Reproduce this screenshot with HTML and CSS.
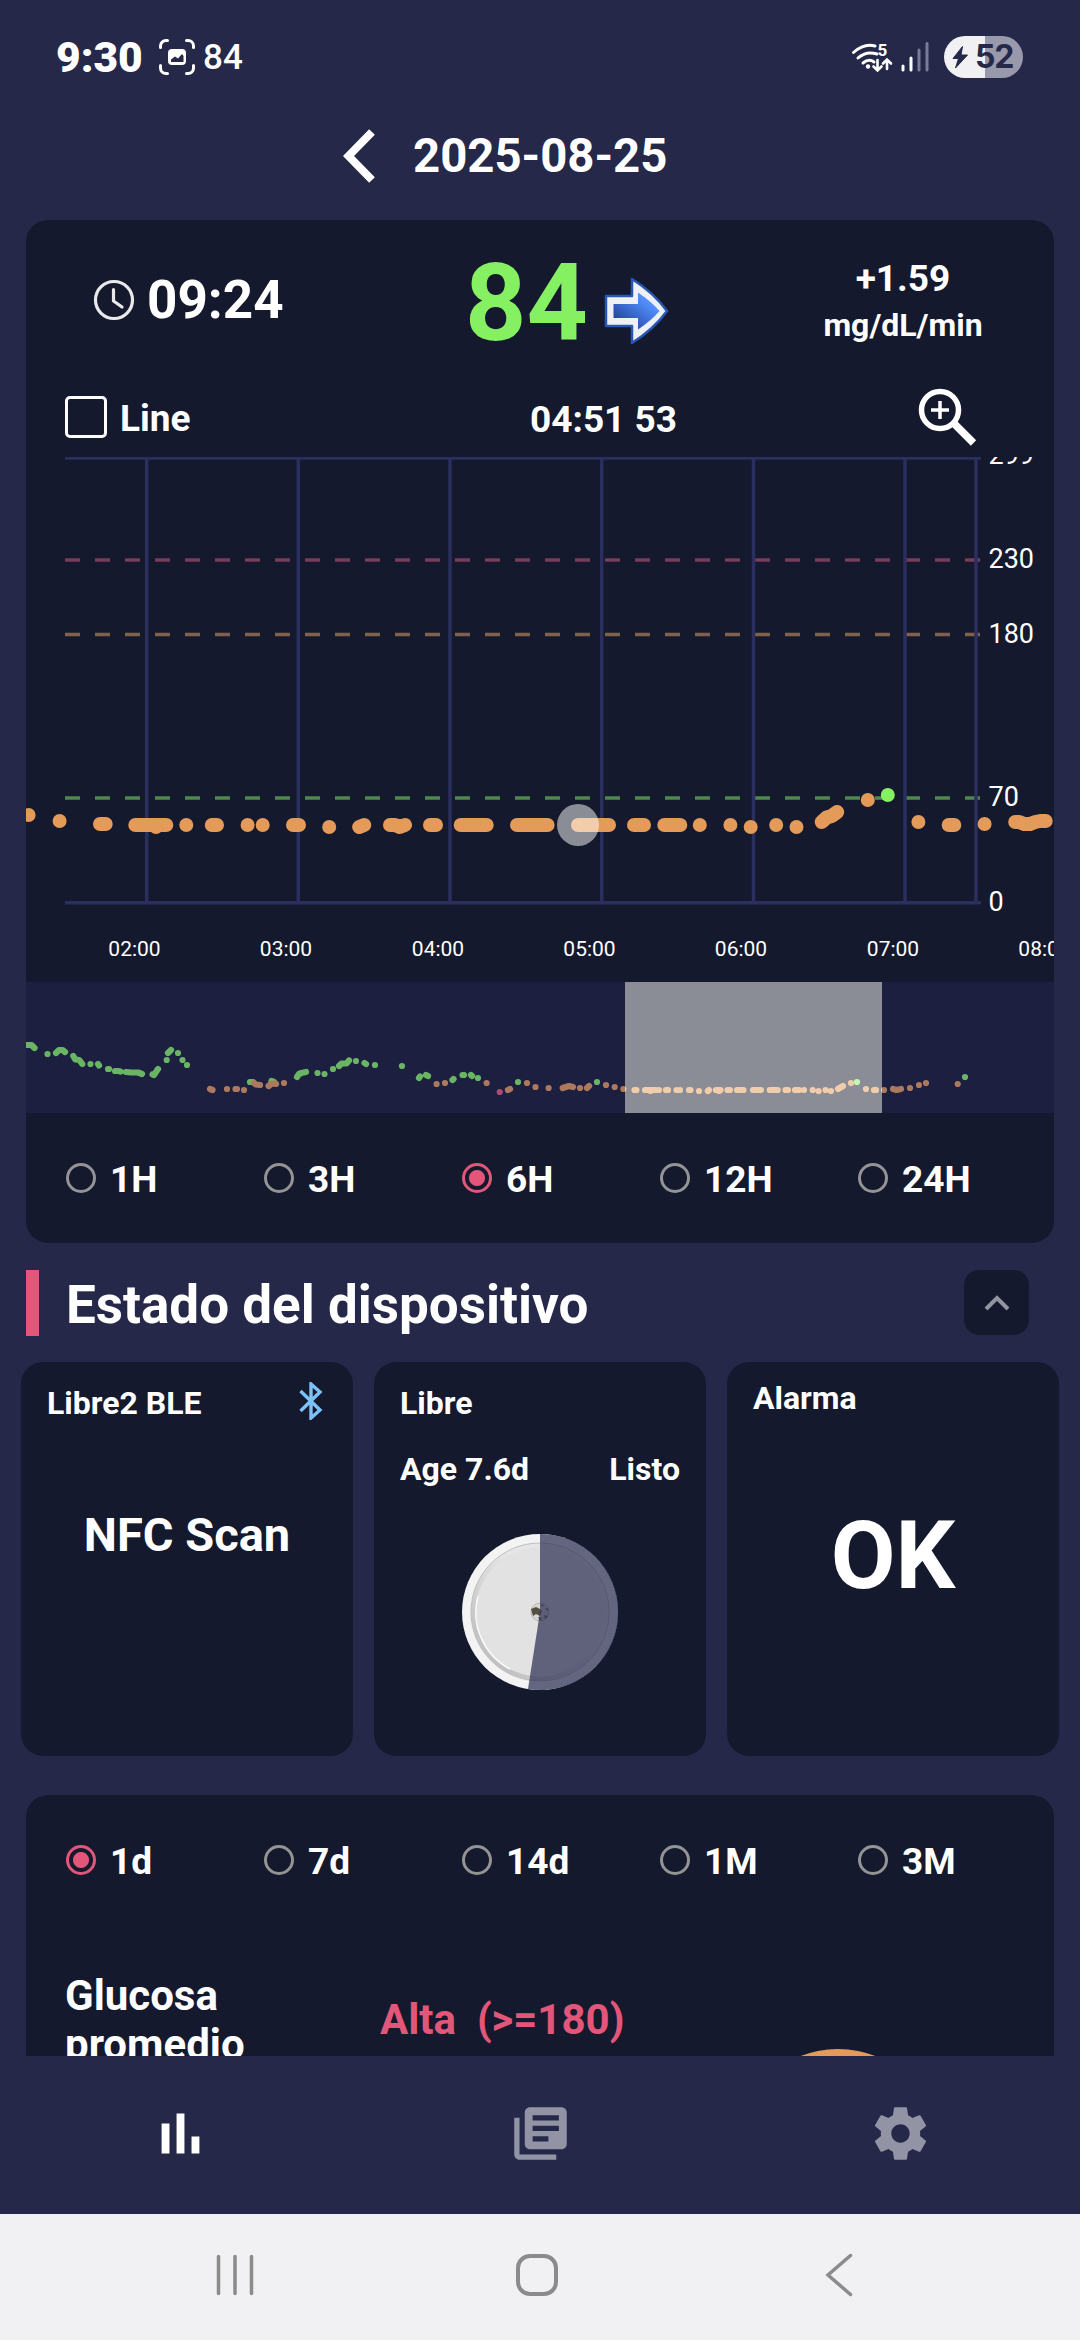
FILE: index.html
```html
<!DOCTYPE html>
<html lang="es">
<head>
<meta charset="utf-8">
<title>Glucosa</title>
<link rel="stylesheet" href="styles.css">
</head>
<body>
<div class="status">
  <span class="status-time">9:30</span>
  <svg class="status-shot" width="38" height="38" viewBox="0 0 38 38" fill="none" stroke="#fff" stroke-width="3" stroke-linecap="round"><path d="M2.500 9.500V8a5.500 5.500 0 0 1 5.500-5.500h1.500M28.500 2.500H30A5.500 5.500 0 0 1 35.500 8v1.500M35.500 27.500V30a5.500 5.500 0 0 1-5.500 5.500h-1.500M9.500 35.500H8A5.500 5.500 0 0 1 2.500 30v-2.500"/><rect x="10" y="11" width="18" height="16" rx="4" fill="#fff" stroke="none"/><path d="M13 24v-2.500l4-3 3 2 4-4.500 1.500 2V24z" fill="#252849" stroke="none"/></svg>
  <span class="status-reading">84</span>
  <svg class="status-net" width="82" height="40" viewBox="848 37 82 40" fill="none" stroke="#fff" stroke-width="3" stroke-linecap="round"><path d="M853.500 52.500Q864 43 875 46M858 58Q866 50.500 877 54M863 63Q869 58 874 62"/><circle cx="868" cy="66.500" r="2.200" fill="#fff" stroke="none"/><path d="M877.500 60v10M873.500 66.500l4 4 4-4M887 69V59.500M883 63.500l4-4 4 4" stroke-width="2.600"/><path d="M903 66v4M911 58v12"/><path d="M919 50v20M927 43.500V70" stroke="#7b7d94"/><text x="877.500" y="56" class="wifi-gen">5</text></svg>
  <span class="battery"><svg width="17" height="23" viewBox="0 0 17 23"><path d="M10.500.5 1 12.500h5.500L3.500 22 15.500 9H9z" fill="#252849" stroke="#252849" stroke-linejoin="round"/></svg><span>52</span></span>
</div>
<header class="date-bar">
  <svg width="34" height="54" viewBox="0 0 34 54" fill="none" stroke="#fff" stroke-width="8"><path d="M29 3 5.500 27 29 51"/></svg>
  <span>2025-08-25</span>
</header>

<main class="content">
<section class="card monitor">
  <div class="readout">
    <div class="clock">
      <svg width="42" height="42" viewBox="0 0 42 42" fill="none" stroke="#e9e9ec" stroke-width="3.200" stroke-linecap="round"><circle cx="21" cy="21" r="18.500"/><path d="M20.500 10.500v11.500l8.500 6"/></svg>
      <span>09:24</span>
    </div>
    <div class="value">
      <span>84</span>
      <svg width="68" height="72" viewBox="0 0 68 72"><defs><linearGradient id="arrow" x1="0" y1="1" x2="1" y2="0"><stop offset=".1" stop-color="#1d3f98"/><stop offset=".75" stop-color="#5590ff"/></linearGradient></defs><path d="M3 21h26V4q22 14 35 32-13 18-35 32V51H3z" fill="#eff0f4" stroke="#2757b4" stroke-width="2.500" stroke-linejoin="round"/><path d="M10.500 29H35V17.500Q49 27 56.500 36 49 45 35 54.500V43H10.500z" fill="url(#arrow)"/></svg>
    </div>
    <div class="rate"><span class="delta">+1.59</span><span class="unit">mg/dL/min</span></div>
  </div>
  <div class="tools">
    <label class="line-toggle"><i class="box"></i>Line</label>
    <span class="picked">04:51 53</span>
    <svg class="zoom-in" width="66" height="66" viewBox="911 382 66 66" fill="none" stroke="#fff"><circle cx="940" cy="409" r="18.500" stroke-width="5.500"/><path d="M931 409h18M940 400v18" stroke-width="3.500"/><path d="M953.500 422 973.500 442" stroke-width="7.500"/></svg>
  </div>
  <svg class="chart" width="1028" height="525" viewBox="26 457 1028 525">
    <g fill="none" stroke-width="3.500">
      <path class="low" d="M65 798H980"/><path class="high" d="M65 634.500H980"/><path class="very-high" d="M65 560H980"/>
      <path class="grid" d="M65 458H981M146.700 458V902M298.300 458V902M450 458V902M601.700 458V902M753.500 458V902M905 458V902M976 458V902M65 902.700H981"/>
    </g>
    <path class="points" d="M28.600 815h0M59.600 821h0M100 824h5.700M135.300 825h31M156 827h0M186.300 825h0M211.800 825h5.200M247.600 825h0M262.700 825h0M293 825h6M329.200 827h0M359.200 827l5-2M390 825h5l4.800 2 5.200-2M430 825h6M460.700 825h26M517 825h30.600M578 825h31M634 825h10M664.300 825h16M699.800 825h0M730.400 825h0M750.700 827h0M776.200 825h0M796.500 827h0M821.700 822l5-4.500 5-1.500 5.500-4M867.800 800h0M918.400 822h0M948.700 825h5.600M984.600 824h0M1015.200 822h4l5 2h6l5-2 5-1h5.500"/>
    <path class="points ok" d="M887.800 795h0"/>
    <circle cx="578" cy="825" r="21" fill="#fff" fill-opacity=".5"/>
    <g class="y-labels"><text x="988.500" y="464">299</text><text x="988.500" y="567.500">230</text><text x="988.500" y="642.500">180</text><text x="988.500" y="805.500">70</text><text x="988.500" y="910.500">0</text></g>
    <g class="x-labels"><text x="134.500" y="956">02:00</text><text x="286" y="956">03:00</text><text x="438" y="956">04:00</text><text x="589.500" y="956">05:00</text><text x="741" y="956">06:00</text><text x="893" y="956">07:00</text><text x="1044.500" y="956">08:00</text></g>
  </svg>
  <svg class="overview" width="1028" height="131" viewBox="26 982 1028 131">
    <path class="points small ok" d="M27 1045h4.500l3 3M47.500 1054h0M56 1053l3-3h3.500l2.500 2M73.300 1056l2 3.500 4 .5 3 4M90.500 1064h0M98 1064l1 1.500M108 1069h1M115 1071h3l2.500.500M126 1072l5 .5h7l4 1.500M152.500 1074.500l1.500.500 4-6M166.700 1060h0M168 1053l3-3M178 1053h0M182.500 1060h0M187 1065h0M250 1082h3M271.500 1081l2.500 1M297 1077l2-3 2.500-1 4.500-1M317.500 1073h0M324.500 1074h0M333 1069h0M339 1066l2.500-2.500h5l2.500-3M356 1061h0M364.500 1063l1.500 1M375 1065h0M402 1066h0M419 1078l1-1.500M426 1075l2 1M452.500 1080l1-1M462.500 1075h1.500M471 1075l1 1M478 1078h0M518 1082h0M597 1082h0M857 1082h0M965 1077h0"/>
    <path class="points small" d="M210 1089l2.500 1M227 1089h0M235.500 1089h1.500M244 1090h0M254 1083l2 1.500 4 .5M268.600 1086l3-2.500 4.500.500M284 1083h0M436.600 1084h0M445 1083h0M486.600 1083h0M508 1090l2-1M527 1083h0M535.500 1087h0M548.600 1088h0M562.700 1088l6.300-2 4 1M580 1088h0M587 1088l2-2M606 1085h0M614.700 1087h0M623.300 1089h0M634.500 1090h2M645 1090h11M650.500 1091h0M659 1090h0M666 1090h2M676.500 1090h0M680 1090h0M689 1090h1.500M699 1091h0M707.800 1091l1.200-1M716 1090h4.500M719 1091h0M727.500 1090h2.500M737 1090h6.500M753 1090h8M769.700 1090h8M785.500 1090h2.500M795 1090h4M804 1090h0M812.700 1090h0M818.600 1091h0M825.500 1090h0M831 1091h0M838 1089l5-3M851 1083h0M866 1089h0M874 1090h2M884 1090h0M893 1089l3.500 1 4.500-1M910 1088h0M919 1085h0M926 1083h0M957.700 1084h0"/>
    <path class="points small alert" d="M499.700 1092h0"/>
    <path d="M26 982H625V1113H26zM882 982h172v131H882z" fill="#2f3069" fill-opacity=".3"/>
    <rect x="625" y="982" width="257" height="131" fill="#fff" fill-opacity=".5"/>
  </svg>
  <div class="radios">
    <label><i></i><span>1H</span></label><label><i></i><span>3H</span></label><label><i class="on"></i><span>6H</span></label><label><i></i><span>12H</span></label><label><i></i><span>24H</span></label>
  </div>
</section>

<div class="section-title">
  <h2>Estado del dispositivo</h2>
  <button class="collapse" type="button" aria-label="Contraer"><svg width="28" height="18" viewBox="0 0 28 18" fill="none" stroke="#92949f" stroke-width="4"><path d="M3 15 14 4 25 15"/></svg></button>
</div>

<div class="devices">
  <article class="card device">
    <div class="device-head"><span>Libre2 BLE</span><svg width="24" height="38" viewBox="0 0 24 38" fill="none" stroke="#7cc2f6" stroke-width="3.400"><path d="M1.500 9 21 28 12 36V2l9 8L1.500 29"/></svg></div>
    <div class="scan">NFC Scan</div>
  </article>
  <article class="card device">
    <div class="device-head"><span>Libre</span></div>
    <div class="device-row"><span>Age 7.6d</span><span>Listo</span></div>
    <svg class="sensor" width="156" height="156" viewBox="-78 -78 156 156"><defs><linearGradient id="rim" x1="1" y1="0" x2="0" y2="1"><stop offset=".4" stop-color="#e6e6e6"/><stop offset="1" stop-color="#b4b4b4"/></linearGradient></defs><circle r="78" fill="#f3f3f3"/><circle r="69" fill="url(#rim)" stroke="#bdbdbd"/><circle cx="0" cy="0" r="64.500" fill="#e2e2e2"/><path d="M-62-16A64 64 0 0 0-30 57" fill="none" stroke="#fafafa" stroke-width="1.500"/><circle r="9" fill="#d6d5d2" stroke="#b5b3ae"/><path d="M-9-3l5-2 4 2 2 2-2 5-4-2-3 2zM1-8l3 1-2 2zM5-3l3-1v3zM4 3l4 1-3 3zM-2 5l4 1-2 3z" fill="#554f42"/><path d="M0 0V-78A78 78 0 1 1-12 77z" fill="#323556" fill-opacity=".74"/></svg>
  </article>
  <article class="card device">
    <div class="device-head alarm"><span>Alarma</span></div>
    <div class="alarm-state">OK</div>
  </article>
</div>

<section class="card stats">
  <div class="radios">
    <label><i class="on"></i><span>1d</span></label><label><i></i><span>7d</span></label><label><i></i><span>14d</span></label><label><i></i><span>1M</span></label><label><i></i><span>3M</span></label>
  </div>
  <div class="summary">
    <div class="average">Glucosa promedio</div>
    <div class="range">Alta&nbsp; (&gt;=180)</div>
    <div class="donut"></div>
  </div>
</section>
</main>

<nav class="tabs">
  <svg viewBox="0 0 24 24" fill="#fff"><path d="M4.800 8.200h3V19.600h-3zM10.500 4.400h3V19.600h-3zM16.200 13.100h3V19.600h-3z"/></svg>
  <svg viewBox="0 0 24 24" fill="#9294a5"><path d="M4 6H2v14c0 1.100.9 2 2 2h14v-2H4V6zm16-4H8c-1.100 0-2 .9-2 2v12c0 1.100.9 2 2 2h12c1.100 0 2-.9 2-2V4c0-1.100-.9-2-2-2zm-1 9H9V9h10v2zm-4 4H9v-2h6v2zm4-8H9V5h10v2z"/></svg>
  <svg viewBox="0 0 24 24" fill="#9294a5"><path d="M19.430 12.980c.04-.32.07-.64.07-.98s-.03-.66-.07-.98l2.110-1.650c.19-.15.24-.42.12-.64l-2-3.460c-.12-.22-.39-.3-.61-.22l-2.490 1c-.52-.4-1.080-.73-1.690-.98l-.38-2.650C14.460 2.180 14.250 2 14 2h-4c-.25 0-.46.18-.49.42l-.38 2.650c-.61.25-1.170.59-1.690.98l-2.490-1c-.23-.09-.49 0-.61.22l-2 3.460c-.13.22-.07.49.12.64l2.110 1.650c-.04.32-.07.65-.07.98s.03.66.07.98l-2.110 1.650c-.19.15-.24.42-.12.64l2 3.460c.12.22.39.3.61.22l2.490-1c.52.4 1.080.73 1.690.98l.38 2.650c.03.24.24.42.49.42h4c.25 0 .46-.18.49-.42l.38-2.650c.61-.25 1.170-.59 1.690-.98l2.490 1c.23.09.49 0 .61-.22l2-3.460c.12-.22.07-.49-.12-.64l-2.110-1.650zM12 15.500c-1.930 0-3.500-1.570-3.500-3.500s1.570-3.500 3.500-3.500 3.500 1.570 3.500 3.500-1.570 3.500-3.500 3.500z"/></svg>
</nav>
<nav class="system">
  <svg width="46" height="46" viewBox="0 0 46 46" fill="none" stroke="#8b8b8b" stroke-width="3.500" stroke-linecap="round"><path d="M6.500 4.500v37M23 4.500v37M39.500 4.500v37"/></svg>
  <svg width="46" height="46" viewBox="0 0 46 46" fill="none" stroke="#8b8b8b" stroke-width="4"><rect x="4" y="4" width="38" height="38" rx="12"/></svg>
  <svg width="46" height="46" viewBox="0 0 46 46" fill="none" stroke="#8b8b8b" stroke-width="3.500" stroke-linecap="round"><path d="M34.500 3.500 12 23 34.500 42.500"/></svg>
</nav>
</body>
</html>
```

FILE: styles.css
```css
* { box-sizing: border-box; }

body {
  margin: 0;
  width: 1080px;
  height: 2340px;
  overflow: hidden;
  display: flex;
  flex-direction: column;
  background: #252849;
  color: #fff;
  font-family: Roboto, "Liberation Sans", sans-serif;
  font-weight: 700;
}

svg { display: block; flex: none; }

/* status bar */
.status {
  flex: none;
  height: 114px;
  padding: 0 57px 0 56px;
  display: flex;
  align-items: center;
}
.status-time { width: 102px; font-size: 42.5px; font-weight: 900; white-space: nowrap; }
.status-reading { margin-left: 7px; font-size: 35px; font-weight: 500; }
.status-net { margin-left: auto; }
.wifi-gen { font-size: 17px; font-weight: 700; fill: #fff; stroke: none; }
.battery {
  width: 79px;
  height: 42px;
  margin-left: 14px;
  padding-left: 8px;
  display: flex;
  align-items: center;
  gap: 6px;
  border-radius: 21px;
  background: linear-gradient(90deg, #f1f1f4 41px, #9899aa 41px);
  color: #252849;
  font: 700 32px/42px Inter, sans-serif;
  letter-spacing: -1.2px;
}

.date-bar {
  flex: none;
  height: 84px;
  margin-bottom: 22px;
  padding-left: 343px;
  display: flex;
  align-items: center;
  gap: 36px;
  font-size: 47.3px;
}

.content {
  flex: 1;
  min-height: 0;
  overflow: hidden;
  display: flex;
  flex-direction: column;
}
.card { background: #15192d; border-radius: 22px; overflow: hidden; flex: none; }

/* glucose monitor */
.monitor { height: 1023px; margin: 0 26px; }
.readout {
  height: 160px;
  display: grid;
  grid-template-columns: 358px 368px 302px;
  align-items: center;
}
.clock { padding-left: 67px; display: flex; align-items: center; gap: 12px; font-size: 53px; }
.value {
  display: flex;
  justify-content: center;
  align-items: center;
  gap: 15px;
  padding-top: 8px;
  color: #84f062;
  font-size: 107px;
  line-height: 120px;
}
.value svg { margin-top: 14px; }
.rate { display: flex; flex-direction: column; align-items: center; padding-top: 4px; line-height: 47px; }
.delta { font-size: 37px; }
.unit { font-size: 32px; }

.tools {
  height: 77px;
  padding-left: 39px;
  display: grid;
  grid-template-columns: 465px 381px auto;
  align-items: center;
  font-size: 37px;
}
.line-toggle { display: flex; align-items: center; gap: 13px; }
.box { width: 42px; height: 42px; margin-bottom: 3px; border: 3px solid #fff; border-radius: 5px; }
.picked { padding-top: 1px; }
.zoom-in { margin-bottom: 6px; }

.grid { stroke: #2b2f5f; }
.low, .high, .very-high { stroke-dasharray: 15 15; }
.low { stroke: #4f884e; }
.high { stroke: #80624a; }
.very-high { stroke: #763c5a; }
.points { fill: none; stroke: #e49a59; stroke-width: 14; stroke-linecap: round; stroke-linejoin: round; }
.points.ok { stroke: #84f062; }
.points.alert { stroke: #e25779; }
.points.small { stroke-width: 6.200; }
.y-labels { font-size: 27px; font-weight: 400; fill: #fff; }
.x-labels { font-size: 21px; font-weight: 400; fill: #fff; text-anchor: middle; }

.radios {
  height: 130px;
  padding-left: 40px;
  display: grid;
  grid-template-columns: repeat(5, 198px);
  align-items: center;
}
.radios label { display: flex; align-items: center; gap: 14px; font-size: 37px; }
.radios span { padding-top: 3px; }
.radios i {
  width: 30px;
  height: 30px;
  border: 3px solid #949494;
  border-radius: 50%;
}
.radios i.on { border-color: #e25779; background: radial-gradient(circle, #e25779 7.500px, transparent 8.500px); }

/* device status */
.section-title {
  flex: none;
  height: 119px;
  padding: 0 51px 0 26px;
  display: flex;
  align-items: center;
  justify-content: space-between;
}
h2 {
  margin: 0;
  height: 66px;
  padding: 2px 0 0 27px;
  border-left: 13px solid #e25779;
  font-size: 53px;
  line-height: 66px;
}
.collapse {
  width: 65px;
  height: 65px;
  padding: 0;
  display: grid;
  place-items: center;
  border: 0;
  border-radius: 15px;
  background: #15192d;
}
.devices { flex: none; padding: 0 21px; display: grid; grid-template-columns: repeat(3, 332px); gap: 21px; }
.device { height: 394px; padding: 0 26px; font-size: 32px; }
.device-head { height: 82px; display: flex; align-items: center; justify-content: space-between; }
.device-head svg { margin-right: 4px; margin-top: -4px; }
.device-head.alarm { height: 72px; }
.device-row { height: 50px; display: flex; align-items: center; justify-content: space-between; }
.scan { padding-top: 60px; text-align: center; font-size: 47px; line-height: 62px; }
.sensor { margin: 40px auto 0; }
.alarm-state { padding-top: 62px; text-align: center; font-size: 94px; line-height: 120px; }

/* statistics */
.stats { flex: 1; margin: 39px 26px 0; border-radius: 22px 22px 0 0; }
.summary {
  padding-left: 39px;
  display: grid;
  grid-template-columns: 315px 355px 206px;
  font-size: 42px;
  line-height: 49px;
}
.average { width: 230px; padding-top: 46px; }
.range { padding-top: 70px; color: #e25779; white-space: nowrap; }
.donut { width: 206px; height: 206px; margin-top: 124px; border-radius: 50%; background: #e49a59; }

/* bottom bars */
.tabs {
  flex: none;
  height: 158px;
  display: flex;
  justify-content: space-around;
  align-items: center;
  padding-bottom: 3px;
}
.tabs svg { width: 63px; height: 63px; }
.system {
  flex: none;
  height: 126px;
  padding: 0 218px 4px 212px;
  display: flex;
  justify-content: space-between;
  align-items: center;
  background: #f1f0f2;
}
```
